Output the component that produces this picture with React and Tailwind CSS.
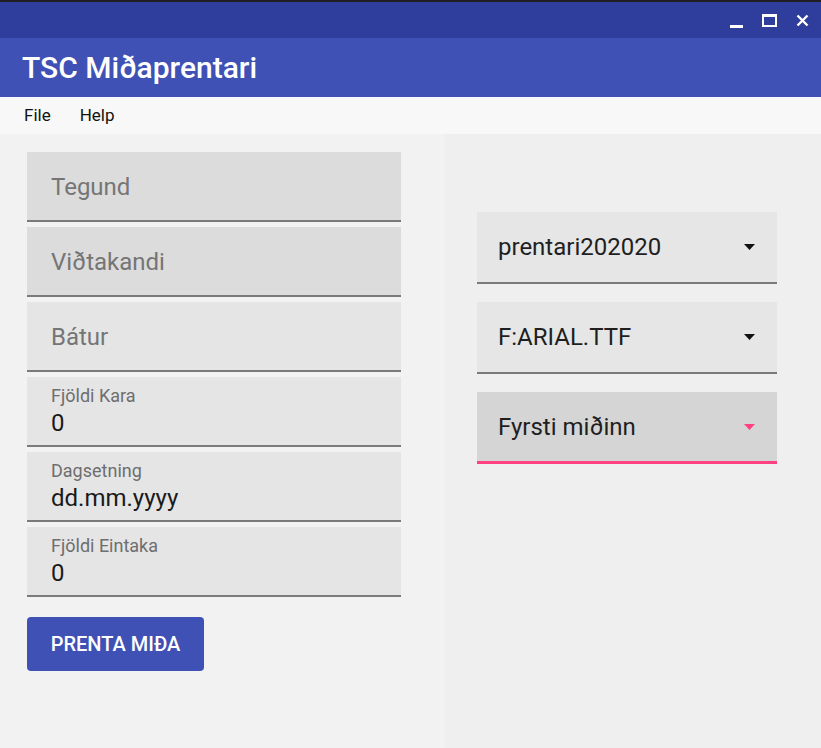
import React from "react";

const font = { fontFamily: "Roboto, 'Noto Sans', sans-serif" };

function PlainField({ placeholder, dark }) {
  return (
    <div
      className={`h-[70px] flex items-center pl-6 border-b-2 border-[#7a7a7a] ${dark ? "bg-[#dcdcdc]" : "bg-[#e5e5e5]"}`}
    >
      <span className="text-[24px] text-[#757575] pt-[1px]">{placeholder}</span>
    </div>
  );
}

function LabelField({ label, value }) {
  return (
    <div className="h-[70px] flex flex-col justify-center pl-6 pt-[4px] bg-[#e5e5e5] border-b-2 border-[#7a7a7a]">
      <span className="text-[18px] leading-[20px] text-[#6e6e6e]">{label}</span>
      <span className="text-[24px] leading-[34px] text-[#1a1a1a]">{value}</span>
    </div>
  );
}

function SelectBox({ value, active }) {
  return (
    <div
      className={`h-[72px] flex items-center justify-between pl-[21px] pr-[22px] ${
        active ? "bg-[#d5d5d5] border-b-[3px] border-[#ff4081]" : "bg-[#e6e6e6] border-b-2 border-[#7a7a7a]"
      }`}
    >
      <span className="text-[24px] text-[#1f1f1f]">{value}</span>
      <svg width="11" height="6" viewBox="0 0 11 6">
        <path d="M0 0 L11 0 L5.5 6 Z" fill={active ? "#ff4081" : "#111"} />
      </svg>
    </div>
  );
}

export default function App() {
  return (
    <div className="w-[821px] h-[748px] flex flex-col bg-[#f2f2f2] overflow-hidden" style={font}>
      {/* window title bar */}
      <div className="h-[38px] bg-[#2f3d9c] border-t-2 border-[#1e1e24] flex items-center justify-end pr-[12px] gap-[19px]">
        <div className="w-[13px] h-[3px] bg-white mt-[12px]" />
        <div className="w-[15px] h-[13px] border-2 border-white border-t-[3px]" />
        <svg width="13" height="13" viewBox="0 0 13 13">
          <path d="M1.5 1.5 L11.5 11.5 M11.5 1.5 L1.5 11.5" stroke="white" strokeWidth="2.4" />
        </svg>
      </div>

      {/* app bar */}
      <div className="h-[59px] bg-[#3f51b5] flex items-center pl-[22px]">
        <span className="text-white text-[30px] font-medium tracking-[0px]">TSC Miðaprentari</span>
      </div>

      {/* menu */}
      <div className="h-[37px] bg-[#f8f8f8] flex items-center pl-[24px] gap-[29px] text-[17px] text-[#111]">
        <span>File</span>
        <span>Help</span>
      </div>

      <div className="flex flex-1">
        <div className="w-[445px] pl-[27px] pt-[18px] bg-[#f2f2f2]">
          <div className="w-[374px] flex flex-col gap-[5px]">
            <PlainField placeholder="Tegund" dark />
            <PlainField placeholder="Viðtakandi" dark />
            <PlainField placeholder="Bátur" />
            <LabelField label="Fjöldi Kara" value="0" />
            <LabelField label="Dagsetning" value="dd.mm.yyyy" />
            <LabelField label="Fjöldi Eintaka" value="0" />
          </div>
          <button className="mt-[20px] w-[177px] h-[54px] bg-[#3f51b5] rounded-[4px] text-white text-[20px] font-medium">
            PRENTA MIÐA
          </button>
        </div>

        <div className="flex-1 bg-[#efefef] pl-[32px] pt-[78px]">
          <div className="w-[300px] flex flex-col gap-[18px]">
            <SelectBox value="prentari202020" />
            <SelectBox value="F:ARIAL.TTF" />
            <SelectBox value="Fyrsti miðinn" active />
          </div>
        </div>
      </div>
    </div>
  );
}
